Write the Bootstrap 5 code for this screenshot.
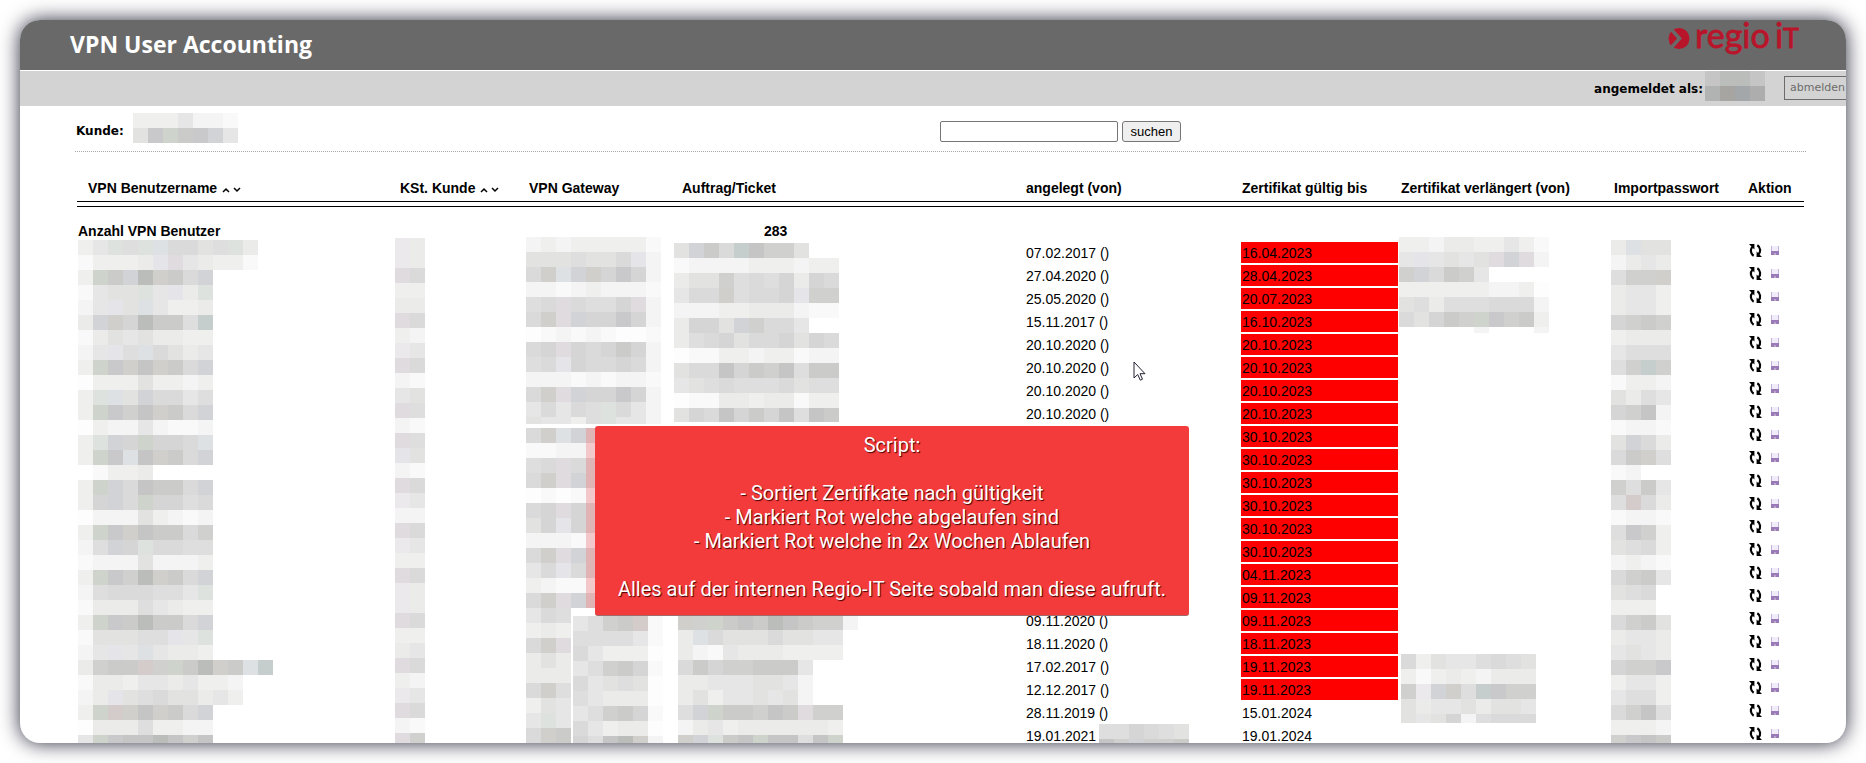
<!DOCTYPE html>
<html lang="de">
<head>
<meta charset="utf-8">
<meta name="viewport" content="width=device-width, initial-scale=1">
<title>VPN User Accounting</title>
<link href="https://cdn.jsdelivr.net/npm/bootstrap@5.3.0/dist/css/bootstrap.min.css" rel="stylesheet">
<style>
  body { font-family: "Liberation Sans", Arial, sans-serif; font-size: 14px; color: #000; background: #fff; }
  .shell { height: 100vh; padding: 20px; }
  .panel { height: 100%; border-radius: 20px; background: #fff; box-shadow: 0 0 20px #28283c; }
  .topbar { height: 51px; padding: 0 46px 0 50px; background: #696969; border-bottom: 1px solid #fff; }
  .topbar h1 { font: 700 23px/49px "Open Sans", "Noto Sans", sans-serif; color: #fff; }
  .userbar { height: 35px; background: #d3d3d3; font-size: 12px; }
  .ui-label { font: bold 12px/20px "DejaVu Sans", Verdana, sans-serif; }
  .user-mosaic { margin-left: 2px; }
  .logout { width: 66px; height: 24px; margin: 0 -4px 2px 19px; padding: 0 5px; border: 1px solid #6b6b6b; background: #d3d3d3; color: #6b6b6b; font: 11px/20px "DejaVu Sans", Verdana, sans-serif; text-align: left; }
  .content { padding: 0 40px 0 55px; }
  .filterbar { height: 46px; padding: 5px 0 0 1px; border-bottom: 1px dotted #a8a8a8; }
  .search-box { width: 178px; height: 21px; margin-left: -1px; border: 1px solid #767676; border-radius: 2px; }
  .search-btn { width: 59px; height: 21px; padding: 0; border: 1px solid #767676; border-radius: 3px; background: #efefef; color: #000; font-size: 13px; line-height: 17px; }
  .users { width: 100%; margin-top: 24px; table-layout: fixed; border-collapse: separate; border-spacing: 2px; line-height: 19px; white-space: nowrap; }
  .users th { padding: 1px; }
  .users td { padding: 2px 1px 0; vertical-align: top; }
  .users th:first-child { padding-left: 11px; }
  .users .rule td { height: 6px; padding: 0; line-height: 1px; border: 0; background: linear-gradient(#000 1px, #fff 1px, #fff 5px, #000 5px); }
  .users .total td { padding: 14px 1px 0; font-weight: bold; line-height: 17px; }
  .users .total .count { padding-left: 83px; }
  .users .expired { background: #f00; }
  .c1 { width: 320px; } .c2 { width: 127px; } .c3 { width: 151px; } .c4 { width: 342px; } .c5 { width: 214px; }
  .c6 { width: 157px; } .c7 { width: 211px; } .c8 { width: 132px; } .c9 { width: 57px; }
  .sort { margin-left: 1px; vertical-align: baseline; }
  .acts { height: 13px; gap: 9px; padding-left: 1px; }
  .mosaic { position: absolute; }
  .kunde-mosaic { margin: -6px 0 0 9px; }
  .note { position: absolute; z-index: 3; left: 575px; top: 406px; width: 594px; height: 190px; padding: 7px 8px; border-radius: 3px; border-bottom: 1px solid #a06a6a; background: #f33b3b; color: #fff; text-align: center; font: 20px/24px Roboto, sans-serif; text-shadow: 1px 1px 1px #400; white-space: pre-line; }
  .pointer { position: absolute; z-index: 4; left: 1113px; top: 341px; }
</style>
</head>
<body>
<div class="shell">
  <div class="panel position-relative overflow-hidden">
    <header class="topbar d-flex justify-content-between">
      <h1 class="m-0">VPN User Accounting</h1>
      <svg width="134" height="40" viewBox="0 0 134 40" fill="#b8152b" role="img" aria-label="regio iT">
        <circle cx="13" cy="18.500" r="10.500"/>
        <path d="M5 9l8.500 9.500L5 28" fill="none" stroke="#696969" stroke-width="3.500"/>
        <g font-family="Lato, sans-serif" stroke="#b8152b" stroke-width=".8">
          <text x="29" y="28" font-size="34">regio</text>
          <text x="109" y="28" font-size="34">i</text>
          <text x="117" y="28" font-size="27">T</text>
        </g>
      </svg>
    </header>
    <div class="userbar d-flex justify-content-end align-items-center">
      <span class="ui-label">angemeldet als:</span>
      <svg id="m-user" class="user-mosaic align-self-start" aria-hidden="true"></svg>
      <button type="button" class="logout flex-shrink-0">abmelden</button>
    </div>
    <main class="content">
      <form class="filterbar d-flex align-items-center">
        <div class="col-6 d-flex align-items-center">
          <span class="ui-label">Kunde:</span>
          <svg id="m-kunde" class="kunde-mosaic" aria-hidden="true"></svg>
        </div>
        <input class="search-box" type="text" aria-label="suchen">
        <button type="button" class="search-btn ms-1">suchen</button>
      </form>
      <table class="users">
        <colgroup><col class="c1"><col class="c2"><col class="c3"><col class="c4"><col class="c5"><col class="c6"><col class="c7"><col class="c8"><col class="c9"></colgroup>
        <thead>
          <tr>
            <th>VPN Benutzername <svg class="sort" width="20" height="6" fill="none" stroke="#000" stroke-width="1.500"><path d="M1 5l3-3 3 3M12 1l3 3 3-3"/></svg></th>
            <th>KSt. Kunde <svg class="sort" width="20" height="6" fill="none" stroke="#000" stroke-width="1.500"><path d="M1 5l3-3 3 3M12 1l3 3 3-3"/></svg></th>
            <th>VPN Gateway</th><th>Auftrag/Ticket</th><th>angelegt (von)</th><th>Zertifikat gültig bis</th>
            <th>Zertifikat verlängert (von)</th><th>Importpasswort</th><th>Aktion</th>
          </tr>
        </thead>
        <tbody id="rows">
          <tr class="rule"><td colspan="9"></td></tr>
          <tr class="total"><td colspan="3">Anzahl VPN Benutzer</td><td class="count">283</td><td colspan="5"></td></tr>
        </tbody>
      </table>
    </main>
    <div class="note">Script:

- Sortiert Zertifkate nach gültigkeit
- Markiert Rot welche abgelaufen sind
- Markiert Rot welche in 2x Wochen Ablaufen

Alles auf der internen Regio-IT Seite sobald man diese aufruft.</div>
    <svg class="pointer" width="14" height="21" viewBox="0 0 14 21" aria-hidden="true"><path d="M1 1v16l3.700-3.500 2.600 5.700 2.200-1-2.500-5.500H12z" fill="#fff" stroke="#223" stroke-width="1"/></svg>
  </div>
</div>
<svg class="d-none">
  <symbol id="renew" viewBox="0 0 12 12"><path d="M4.300 10.800C1.300 9 .9 5 3.200 2.500M7.700 1.200c3 1.800 3.400 5.800 1.100 8.300" fill="none" stroke="#000" stroke-width="2"/><path d="M0 0h5v5zM12 12H7V7z"/></symbol>
  <symbol id="disk" viewBox="0 0 8 9"><path d="M0 0h8v9H0z" fill="#c4b4dc"/><path d="M1 0h6v5H1z" fill="#f0ecfa"/><path d="M0 5h8v4H0z" fill="#9a7ab6"/><path d="M3 7h2v2H3z" fill="#b9a6ca"/></symbol>
</svg>
<script src="https://cdn.jsdelivr.net/npm/bootstrap@5.3.0/dist/js/bootstrap.bundle.min.js"></script>
<script>
  // One letter per blurred tile; a dot is an empty tile.
  const tones = {0:'fdfdfd',1:'f9f9f9',2:'f4f4f4',3:'efefee',4:'ebebea',5:'e6e6e6',6:'e2e2e1',7:'dedede',8:'dadada',9:'d5d5d5',
    a:'d0d0cf',b:'cbcbca',c:'c4c5c4',d:'bbbdbb',k:'ced3cc',h:'dee2df',p:'e0dbdf',q:'ece9ed',l:'d2d3d7',m:'c9c9cc',v:'e5e5e9',
    t:'c6cdcd',s:'dee1e3',w:'d1cfcc',y:'ebeae7',r:'d4cbcb',A:'b1b3b2',B:'a7a5a2',C:'a3a7a9',D:'adadad',x:'e0b3b5',z:'f3c8ca'};
  const SIZE = 15;
  function tiles(svg, text) {
    const lines = text.split(' ');
    svg.setAttribute('width', SIZE * Math.max(...lines.map(l => l.length)));
    svg.setAttribute('height', SIZE * lines.length);
    svg.setAttribute('shape-rendering', 'crispEdges');
    svg.innerHTML = lines.map((l, y) => [...l].map((c, x) => c === '.' ? '' :
      `<rect x="${x * SIZE}" y="${y * SIZE}" width="${SIZE}" height="${SIZE}" fill="#${tones[c]}"/>`).join('')).join('');
  }
  tiles(document.getElementById('m-user'), 'cddc ABCD');
  tiles(document.getElementById('m-kunde'), '3335221 6mkbml5');

  // Creation date and expiry date of each certificate.
  const users = [
    ['07.02.2017 ()', '16.04.2023'], ['27.04.2020 ()', '28.04.2023'], ['25.05.2020 ()', '20.07.2023'], ['15.11.2017 ()', '16.10.2023'],
    ['20.10.2020 ()', '20.10.2023'], ['20.10.2020 ()', '20.10.2023'], ['20.10.2020 ()', '20.10.2023'], ['20.10.2020 ()', '20.10.2023'],
    ['', '30.10.2023'], ['', '30.10.2023'], ['', '30.10.2023'], ['', '30.10.2023'], ['', '30.10.2023'], ['', '30.10.2023'],
    ['', '04.11.2023'], ['', '09.11.2023'], ['09.11.2020 ()', '09.11.2023'], ['18.11.2020 ()', '18.11.2023'],
    ['17.02.2017 ()', '19.11.2023'], ['12.12.2017 ()', '19.11.2023'], ['28.11.2019 ()', '15.01.2024'], ['19.01.2021', '19.01.2024']
  ];
  document.getElementById('rows').insertAdjacentHTML('beforeend', users.map(([made, until]) => `<tr>
    <td></td><td></td><td></td><td></td><td>${made}</td>
    <td class="${until.endsWith('2023') ? 'expired' : ''}">${until}</td><td></td><td></td>
    <td><div class="acts d-flex align-items-center"><a href="#" class="d-flex" aria-label="verlängern"><svg width="13" height="13"><use href="#renew"/></svg></a><a href="#" class="d-flex" aria-label="speichern"><svg width="8" height="9"><use href="#disk"/></svg></a></div></td></tr>`).join(''));

  // Blurred regions: row, column, left, top (from that cell), tiles, visible height if cut.
  const regions = [
    [0, 0, 1, -2, '35h7hs8867h4 13334vp54331 3kbldwb8l 1566h5v4h 25v6s5334 4lw9dbb7t 146564433 25v7s8645 3kmwcwb8l 033363323 3hs6l8857 3kmacwb8l 032252112 3hl9k998s 3kmscwb8l .1334.... 3kl8cbb8l 39l8k9978 022263212 3kmwcbb8a 27l9h8877 122262223 3kmadwb8l 27888775h 144475433 3kmbdbb8l 166677v5h 25v5s5443 4abbrakbdwbst 14435545332 24v67866453 3krwcwb8l 044473322 5kmccdcac'],
    [0, 1, -4, -4, 'q4 q4 p8 33 44 p8 32 q5 p8 21 56 p7 21 p7 v6 21 p8 q5 22 p8 q5 33 p8 q4 q4 p8 33 45 p8 32 q5 p8 21 pa'],
    [0, 2, -2, -5, '232333331 6667668v2 8wslw9m92 221232221 78p8779p2 8wpl99m92 012121001 89p989b92 78v988982 222121221 8wpl99m92 58587h852 65537h552', 187],
    [0, 2, -2, 186, '8wslx 1122z 78p8x 8wplx 0101z 89p9x 69v9x 2221z 8wplx 58v8x 3211z 8wplx 587. 343. 8wp. 464. 444. 8w7. 365. 5h5. 8wb.', 315],
    [0, 2, 45, 374, '57abr1 777751 853330 57ab91 856760 754440 57ab91 853440 97cdw2'],
    [0, 3, -7, 1, '6lb8tcaa6.. 12222333233 466a7879498 588w7889vaa 22233444211 4996la885.. 47896889698 01133233122 688c9bac7bb 56787778677 01144344133 698c9b9c7cb', 179],
    [0, 3, -3, 373, 'wakbcbdcbaa2 4s866686655 42154443333 8b9aabbb5 445556652 463556562 7lkbbacbpaa 24534444443 wlhbckcc7ck'],
    [21, 4, 74, -1, '779876 calaab'],
    [0, 6, -1, -5, '3324433531 5v5656plp2 al8ba5 3333332230 6747778882 869bakmab3 .....2...2', 96],
    [0, 6, 1, 412, '836557876 313432444 aqlw7tmaa 645564665 656927888', 69],
    [0, 7, -2, -2, '4s66 2454 7aaw 4553 4553 9aba 3444 5777 7ata 1332 6475 9ac2 1221 6l84 8bw7 12 a7b5 7r84 1221 7ma3 6783 2321 8ab5 678 333 8ab6 4554 5654 9aam 3553 5773 8ac7 3332 amcb']
  ];
  const body = document.getElementById('rows').rows;
  for (const [r, c, x, y, text, cut] of regions) {
    const cell = body[r + 2].cells[c];
    cell.classList.add('position-relative');
    const svg = document.createElementNS('http://www.w3.org/2000/svg', 'svg');
    svg.setAttribute('class', 'mosaic');
    svg.style.left = x + 'px';
    svg.style.top = y + 'px';
    tiles(svg, text);
    if (cut) svg.setAttribute('height', cut);
    cell.append(svg);
  }
</script>
</body>
</html>
